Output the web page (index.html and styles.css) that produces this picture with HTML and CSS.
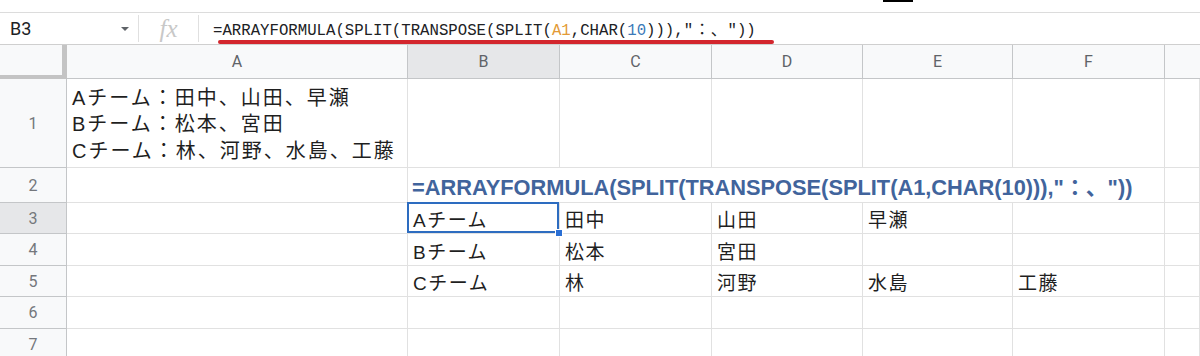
FILE: index.html
```html
<!DOCTYPE html>
<html lang="ja">
<head>
  <meta charset="UTF-8">
  <title>ARRAYFORMULA SPLIT</title>
  <link rel="stylesheet" href="styles.css">
</head>
<body>
  <div class="top-strip"><span class="tab-mark"></span></div>

  <div class="formula-bar">
    <div class="name-box">
      <span class="cell-ref">B3</span>
      <span class="caret"></span>
    </div>
    <div class="fx">fx</div>
    <div class="formula">
      <span class="formula-text">=ARRAYFORMULA(SPLIT(TRANSPOSE(SPLIT(<span class="ref">A1</span>,CHAR(<span class="num">10</span>))),"<span class="wide">：、</span>"))</span>
      <span class="underline"></span>
    </div>
  </div>

  <div class="grid">
    <!-- header row -->
    <div class="corner"></div>
    <div class="col-h">A</div>
    <div class="col-h selected">B</div>
    <div class="col-h">C</div>
    <div class="col-h">D</div>
    <div class="col-h">E</div>
    <div class="col-h">F</div>
    <div class="col-h last"></div>

    <!-- row 1 -->
    <div class="row-h">1</div>
    <div class="cell multi">Aチーム：田中、山田、早瀬<br>Bチーム：松本、宮田<br>Cチーム：林、河野、水島、工藤</div>
    <div class="cell"></div>
    <div class="cell"></div>
    <div class="cell"></div>
    <div class="cell"></div>
    <div class="cell"></div>
    <div class="cell"></div>

    <!-- row 2 -->
    <div class="row-h">2</div>
    <div class="cell"></div>
    <div class="cell span5 shown">=ARRAYFORMULA(SPLIT(TRANSPOSE(SPLIT(A1,CHAR(10))),"：、"))</div>
    <div class="cell"></div>

    <!-- row 3 -->
    <div class="row-h selected">3</div>
    <div class="cell"></div>
    <div class="cell active">Aチーム<span class="handle"></span></div>
    <div class="cell">田中</div>
    <div class="cell">山田</div>
    <div class="cell">早瀬</div>
    <div class="cell"></div>
    <div class="cell"></div>

    <!-- row 4 -->
    <div class="row-h">4</div>
    <div class="cell"></div>
    <div class="cell">Bチーム</div>
    <div class="cell">松本</div>
    <div class="cell">宮田</div>
    <div class="cell"></div>
    <div class="cell"></div>
    <div class="cell"></div>

    <!-- row 5 -->
    <div class="row-h">5</div>
    <div class="cell"></div>
    <div class="cell">Cチーム</div>
    <div class="cell">林</div>
    <div class="cell">河野</div>
    <div class="cell">水島</div>
    <div class="cell">工藤</div>
    <div class="cell"></div>

    <!-- row 6 -->
    <div class="row-h">6</div>
    <div class="cell"></div>
    <div class="cell"></div>
    <div class="cell"></div>
    <div class="cell"></div>
    <div class="cell"></div>
    <div class="cell"></div>
    <div class="cell"></div>

    <!-- row 7 -->
    <div class="row-h">7</div>
    <div class="cell"></div>
    <div class="cell"></div>
    <div class="cell"></div>
    <div class="cell"></div>
    <div class="cell"></div>
    <div class="cell"></div>
    <div class="cell"></div>
  </div>
</body>
</html>
```

FILE: styles.css
```css
:root {
  --grid: #e1e1e1;
  --head-line: #c4c6c8;
  --head-bg: #f8f9fa;
  --head-sel: #e6e7e9;
  --sel: #2d6cc0;
}

* {
  box-sizing: border-box;
}

body {
  margin: 0;
  width: 1200px;
  height: 356px;
  overflow: hidden;
  background: #fff;
  color: #1f1f1f;
  font-family: "Liberation Sans", "Noto Sans CJK JP", sans-serif;
}

.top-strip {
  height: 13px;
  border-bottom: 1px solid #dcdcdc;
}

.tab-mark {
  display: block;
  margin-left: 883px;
  width: 30px;
  height: 2px;
  background: #000;
}

/* formula bar */
.formula-bar {
  display: flex;
  height: 32px;
  border-bottom: 1px solid #cfcfcf;
}

.name-box {
  width: 139px;
  display: flex;
  align-items: center;
  justify-content: space-between;
  padding: 0 9px 0 10px;
  border-right: 1px solid #e0e0e0;
  margin: 2px 0;
}

.cell-ref {
  font-family: Roboto, sans-serif;
  font-size: 18px;
  color: #202124;
}

.caret {
  width: 0;
  height: 0;
  border-left: 4px solid transparent;
  border-right: 4px solid transparent;
  border-top: 4px solid #5f6368;
}

.fx {
  width: 60px;
  display: flex;
  align-items: center;
  justify-content: center;
  border-right: 1px solid #e0e0e0;
  margin: 2px 0;
  font-family: "Liberation Serif", serif;
  font-style: italic;
  font-size: 25px;
  color: #c8c8c8;
}

.formula {
  position: relative;
  flex: 1;
  display: flex;
  align-items: center;
  padding-left: 14px;
}

.formula-text {
  font-family: "Liberation Mono", "Noto Sans CJK JP", monospace;
  font-size: 15.7px;
  color: #202124;
  white-space: nowrap;
}

.formula-text .ref {
  color: #e39a36;
}

.formula-text .num {
  color: #3b79b8;
}

.formula-text .wide {
  letter-spacing: 1px;
  padding-left: 1px;
}

.underline {
  position: absolute;
  left: 19px;
  top: 27px;
  width: 556px;
  height: 4px;
  border-radius: 2px;
  background: #d3262d;
}

/* grid */
.grid {
  display: grid;
  grid-template-columns: 67px 341px 152px 152px 151px 150px 152px 1fr;
  grid-template-rows: 34px 89px 35px 31px 32px 31px 32px 32px;
}

.corner {
  background: var(--head-bg);
  border-right: 6px solid #c4c4c4;
  border-bottom: 4px solid #c4c4c4;
  margin-right: -1px;
}

.col-h {
  display: flex;
  align-items: center;
  justify-content: center;
  background: var(--head-bg);
  border-right: 1px solid var(--head-line);
  border-bottom: 1px solid var(--head-line);
  font-family: Roboto, sans-serif;
  font-size: 16px;
  color: #5f6368;
}

.col-h.last {
  border-right: none;
}

.row-h {
  display: flex;
  align-items: center;
  justify-content: center;
  background: var(--head-bg);
  border-right: 1px solid var(--head-line);
  border-bottom: 1px solid var(--head-line);
  font-family: Roboto, sans-serif;
  font-size: 16px;
  color: #74777c;
}

.selected {
  background: var(--head-sel);
}

.cell {
  position: relative;
  display: flex;
  align-items: center;
  padding: 1px 4px 0 5px;
  border-right: 1px solid var(--grid);
  border-bottom: 1px solid var(--grid);
  font-size: 19px;
  letter-spacing: 1.5px;
  white-space: nowrap;
}

.cell.multi {
  align-items: flex-end;
  padding-bottom: 3px;
  font-size: 20px;
  letter-spacing: 2px;
  line-height: 26.5px;
}

.cell.span5 {
  grid-column: span 5;
}

.cell.shown {
  font-weight: bold;
  font-size: 21.8px;
  letter-spacing: 0;
  color: #41649c;
  padding-left: 4px;
}

.cell.active::after {
  content: "";
  position: absolute;
  left: -1px;
  top: -1px;
  right: 0;
  bottom: 0;
  border: 2px solid var(--sel);
}

.handle {
  position: absolute;
  right: -4px;
  bottom: -4px;
  width: 8px;
  height: 8px;
  background: #2a6fd4;
  border: 1px solid #fff;
  z-index: 1;
}
```
